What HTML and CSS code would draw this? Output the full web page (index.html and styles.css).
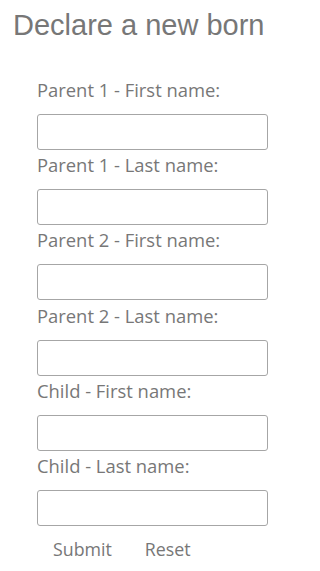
FILE: index.html
```html
<!DOCTYPE html>
<html>
<head>
<meta charset="utf-8">
<link rel="stylesheet" href="styles.css">
</head>
<body>
<h1 class="title">Declare a new born</h1>
<form class="form">
  <div class="field"><label class="label">Parent 1 - First name:</label><input class="input" type="text"></div>
  <div class="field"><label class="label">Parent 1 - Last name:</label><input class="input" type="text"></div>
  <div class="field"><label class="label">Parent 2 - First name:</label><input class="input" type="text"></div>
  <div class="field"><label class="label">Parent 2 - Last name:</label><input class="input" type="text"></div>
  <div class="field"><label class="label">Child - First name:</label><input class="input" type="text"></div>
  <div class="field"><label class="label">Child - Last name:</label><input class="input" type="text"></div>
  <div class="actions">
    <button class="btn" type="button">Submit</button>
    <button class="btn" type="button">Reset</button>
  </div>
</form>
</body>
</html>
```
FILE: styles.css
```css
html, body {
  margin: 0;
  padding: 0;
  background: #fff;
}
body {
  width: 284px;
  height: 571px;
  overflow: hidden;
}
.title {
  margin: 0;
  padding: 8px 0 0 13px;
  font-family: "Liberation Sans", Arial, sans-serif;
  font-weight: normal;
  font-size: 29px;
  line-height: 34px;
  color: #777;
}
.form {
  margin: 0;
  padding: 37px 0 0 37px;
  font-family: "Open Sans", sans-serif;
  color: #777;
}
.field {
  display: flex;
  flex-direction: column;
  margin-bottom: 4.2px;
}
.label {
  font-size: 18.4px;
  line-height: 22px;
  margin-bottom: 13px;
  white-space: nowrap;
}
.input {
  box-sizing: border-box;
  width: 231px;
  height: 36px;
  margin: 0;
  border: 1px solid #a6a6a6;
  border-radius: 3px;
  background: #fff;
  padding: 0 6px;
  font: inherit;
}
.actions {
  display: flex;
  padding-top: 8px;
  padding-left: 8px;
}
.btn {
  font-family: "Open Sans", sans-serif;
  font-size: 17.8px;
  line-height: 22px;
  color: #777;
  background: none;
  border: none;
  padding: 0 8px;
  margin-right: 17px;
}
```
